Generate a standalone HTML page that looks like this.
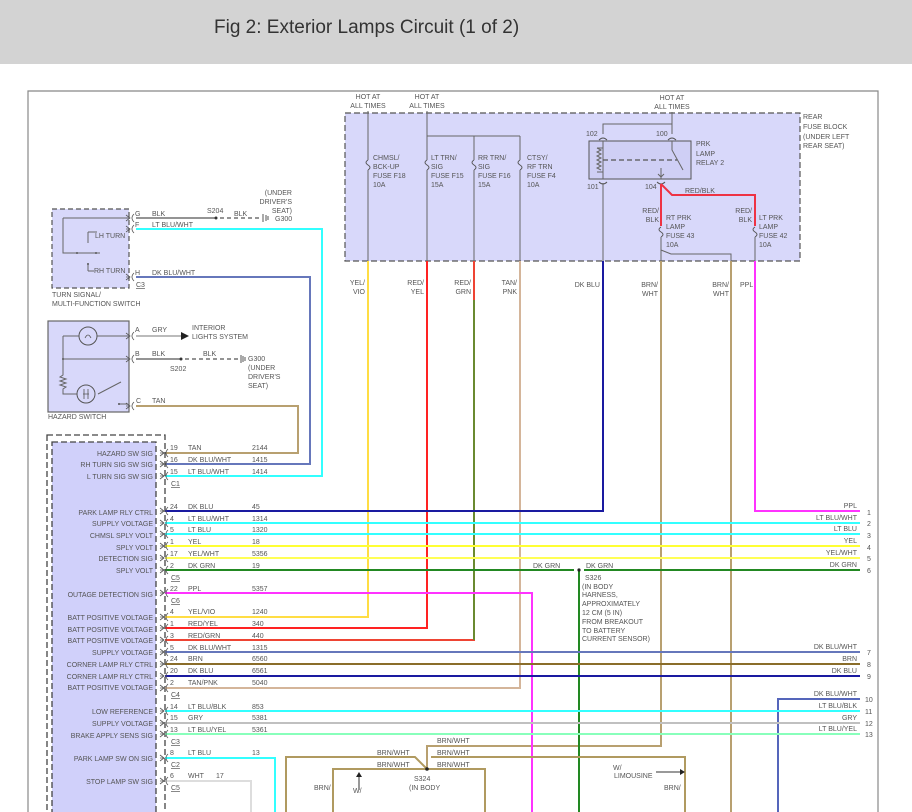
<!DOCTYPE html>
<html><head><meta charset="utf-8"><style>
html,body{margin:0;padding:0;background:#fff;width:912px;height:812px;overflow:hidden}
#hd{position:absolute;left:0;top:0;width:912px;height:64px;background:#d3d3d3}
#hd span{position:absolute;left:214px;top:17px;font:19px "Liberation Sans",sans-serif;color:#333}
svg{position:absolute;left:0;top:0}
text{font-family:"Liberation Sans",sans-serif;font-size:7px;fill:#555}
.e{text-anchor:end}.m{text-anchor:middle}
.w{fill:none;stroke-width:2}
.g{fill:none;stroke:#666;stroke-width:1}
</style></head><body>
<div id="hd"><span>Fig 2: Exterior Lamps Circuit (1 of 2)</span></div>
<svg width="912" height="812" viewBox="0 0 912 812">
<defs>
<symbol id="pin" overflow="visible"><path d="M-9,-3 l4,3 l-4,3 M-5,0 h-4 M-1,-4 q-4,4 0,8" fill="none" stroke="#555" stroke-width="0.8"/></symbol>
<symbol id="fz" overflow="visible"><path d="M0,-5 q-4,2.5 0,5 q4,2.5 0,5" fill="none" stroke="#555" stroke-width="0.9"/></symbol>
</defs>
<!-- frame -->
<path d="M28,812 V91 H878 V812" fill="none" stroke="#888" stroke-width="1.2"/>

<!-- fuse block -->
<rect x="345" y="113" width="455" height="148" fill="#d8d8fa" stroke="#555" stroke-width="1.2" stroke-dasharray="6,3"/>
<text x="803" y="119">REAR</text><text x="803" y="129">FUSE BLOCK</text><text x="803" y="139">(UNDER LEFT</text><text x="803" y="148">REAR SEAT)</text>
<text class="m" x="368" y="99">HOT AT</text><text class="m" x="368" y="108">ALL TIMES</text>
<text class="m" x="427" y="99">HOT AT</text><text class="m" x="427" y="108">ALL TIMES</text>
<text class="m" x="672" y="100">HOT AT</text><text class="m" x="672" y="109">ALL TIMES</text>
<path class="g" d="M368,111 V261 M427,111 V261 M427,136 H520 M474,136 V261 M520,136 V261" stroke-width="1.3"/>
<rect x="366" y="160" width="4" height="10" fill="#d8d8fa"/><use href="#fz" x="368" y="165"/>
<rect x="425" y="160" width="4" height="10" fill="#d8d8fa"/><use href="#fz" x="427" y="165"/>
<rect x="472" y="160" width="4" height="10" fill="#d8d8fa"/><use href="#fz" x="474" y="165"/>
<rect x="518" y="160" width="4" height="10" fill="#d8d8fa"/><use href="#fz" x="520" y="165"/>
<text x="373" y="160">CHMSL/</text><text x="373" y="169">BCK-UP</text><text x="373" y="178">FUSE F18</text><text x="373" y="187">10A</text>
<text x="431" y="160">LT TRN/</text><text x="431" y="169">SIG</text><text x="431" y="178">FUSE F15</text><text x="431" y="187">15A</text>
<text x="478" y="160">RR TRN/</text><text x="478" y="169">SIG</text><text x="478" y="178">FUSE F16</text><text x="478" y="187">15A</text>
<text x="527" y="160">CTSY/</text><text x="527" y="169">RF TRN</text><text x="527" y="178">FUSE F4</text><text x="527" y="187">10A</text>
<!-- relay -->
<path class="g" d="M672,112 V124 H603 V134 M672,124 V134" stroke-width="1.3"/>
<text x="586" y="136">102</text><text x="656" y="136">100</text>
<path d="M599,140 q4,-4 8,0 M668,140 q4,-4 8,0" fill="none" stroke="#555"/>
<rect x="589" y="141" width="102" height="38" fill="#cfcff5" stroke="#555" stroke-width="1"/>
<path class="g" d="M603,141 V179 M597,148 l4,2 -4,2 4,2 -4,2 4,2 -4,2 4,2 -4,2 4,2 -4,2 4,2 M597,148 h6 M597,172 h6 M672,141 V150 L683,170"/>
<path d="M603,160 H677" stroke="#555" stroke-width="1.3" stroke-dasharray="5,3"/>
<path class="g" d="M661,168 V179 M658,174 l3,3 3,-3"/>
<text x="696" y="146">PRK</text><text x="696" y="156">LAMP</text><text x="696" y="165">RELAY 2</text>
<path d="M599,182 q4,4 8,0 M657,182 q4,4 8,0" fill="none" stroke="#555"/>
<text x="587" y="189">101</text><text x="645" y="189">104</text>
<path class="g" d="M603,183 V261" stroke-width="1.3"/>
<path class="w" stroke="#ee3344" d="M661,184 V226 M661,184 L672,195 H755 V226"/>
<text x="685" y="193">RED/BLK</text>
<text class="e" x="659" y="213">RED/</text><text class="e" x="659" y="222">BLK</text>
<text class="e" x="752" y="213">RED/</text><text class="e" x="752" y="222">BLK</text>
<rect x="659" y="227" width="4" height="10" fill="#d8d8fa"/><use href="#fz" x="661" y="232"/>
<rect x="753" y="227" width="4" height="10" fill="#d8d8fa"/><use href="#fz" x="755" y="232"/>
<path class="g" d="M661,237 V261 M661,250 L671,254 H731 V261 M755,237 V261" stroke-width="1.3"/>
<text x="666" y="220">RT PRK</text><text x="666" y="229">LAMP</text><text x="666" y="238">FUSE 43</text><text x="666" y="247">10A</text>
<text x="759" y="220">LT PRK</text><text x="759" y="229">LAMP</text><text x="759" y="238">FUSE 42</text><text x="759" y="247">10A</text>

<!-- labels under fuse block -->
<text class="e" x="365" y="285">YEL/</text><text class="e" x="365" y="294">VIO</text>
<text class="e" x="424" y="285">RED/</text><text class="e" x="424" y="294">YEL</text>
<text class="e" x="471" y="285">RED/</text><text class="e" x="471" y="294">GRN</text>
<text class="e" x="517" y="285">TAN/</text><text class="e" x="517" y="294">PNK</text>
<text class="e" x="600" y="287">DK BLU</text>
<text class="e" x="658" y="287">BRN/</text><text class="e" x="658" y="296">WHT</text>
<text class="e" x="729" y="287">BRN/</text><text class="e" x="729" y="296">WHT</text>
<text x="740" y="287">PPL</text>

<!-- turn signal switch -->
<rect x="52" y="209" width="77" height="79" fill="#d8d8fa" stroke="#555" stroke-width="1.2" stroke-dasharray="5,3"/>
<path class="g" d="M63,218 H128 M63,218 V253 H100 M88,232 V243 M88,232 H97 M88,271 H94 M88,264 V271"/>
<circle cx="77" cy="253" r="1" fill="#555"/><circle cx="96" cy="253" r="1" fill="#555"/><circle cx="88" cy="264" r="1" fill="#555"/>
<text x="95" y="238">LH TURN</text><text x="94" y="273">RH TURN</text>
<use href="#pin" x="135" y="218"/><use href="#pin" x="135" y="229"/><use href="#pin" x="135" y="277"/>
<text x="135" y="216">G</text><text x="135" y="227">F</text><text x="135" y="275">H</text>
<text x="136" y="287" style="text-decoration:underline">C3</text>
<text x="52" y="297">TURN SIGNAL/</text><text x="52" y="306">MULTI-FUNCTION SWITCH</text>
<text x="152" y="216">BLK</text><text x="207" y="213">S204</text><text x="234" y="216">BLK</text>
<path d="M136,218 H216" stroke="#555" stroke-width="1.3"/><circle cx="216" cy="218" r="1.5" fill="#333"/>
<path d="M220,218 H262" stroke="#555" stroke-width="1.3" stroke-dasharray="4,3"/>
<path d="M263,214 v8 M266,215 v6 M268,216 v4" stroke="#555"/>
<text x="275" y="221">G300</text>
<text class="e" x="292" y="195">(UNDER</text><text class="e" x="292" y="204">DRIVER'S</text><text class="e" x="292" y="213">SEAT)</text>
<text x="152" y="227">LT BLU/WHT</text><text x="152" y="275">DK BLU/WHT</text>
<path class="w" stroke="#33ffff" d="M136,229 H322 V476 H165"/>
<path class="w" stroke="#6677bb" d="M136,277 H310 V464 H165"/>

<!-- hazard switch -->
<rect x="48" y="321" width="81" height="91" fill="#d8d8fa" stroke="#666" stroke-width="1.2"/>
<path class="g" d="M63,336 H128 M63,336 V372 M63,359 H128 M63,372 v3 l-3,2 6,2 -6,2 6,2 -6,2 6,2 -3,2 V394 H78 M98,394 L119,383 M119,383 l2,-1 M119,404 H128"/>
<circle cx="88" cy="336" r="9" fill="#d8d8fa" stroke="#555"/><path d="M85,338 q3,-6 6,0" fill="none" stroke="#555" stroke-width="0.8"/>
<circle cx="86" cy="394" r="9" fill="#d8d8fa" stroke="#555"/><path d="M84,389 v10 M88,389 v10 M83,394 h6" stroke="#555" stroke-width="0.8"/>
<circle cx="63" cy="359" r="1" fill="#555"/><circle cx="119" cy="404" r="1" fill="#555"/>
<use href="#pin" x="135" y="336"/><use href="#pin" x="135" y="359"/><use href="#pin" x="135" y="406"/>
<text x="135" y="332">A</text><text x="135" y="356">B</text><text x="136" y="403">C</text>
<text x="48" y="419">HAZARD SWITCH</text>
<text x="152" y="332">GRY</text><path d="M136,336 H182" stroke="#bbb" stroke-width="2"/><path d="M181,332 l8,4 -8,4z" fill="#222"/>
<text x="192" y="330">INTERIOR</text><text x="192" y="339">LIGHTS SYSTEM</text>
<text x="152" y="356">BLK</text><path d="M136,359 H181" stroke="#555" stroke-width="1.3"/><circle cx="181" cy="359" r="1.5" fill="#333"/>
<path d="M185,359 H240" stroke="#555" stroke-width="1.3" stroke-dasharray="4,3"/><path d="M241,355 v8 M243,356 v6 M245,357 v4" stroke="#555"/>
<text x="203" y="356">BLK</text><text x="170" y="371">S202</text>
<text x="248" y="361">G300</text><text x="248" y="370">(UNDER</text><text x="248" y="379">DRIVER'S</text><text x="248" y="388">SEAT)</text>
<text x="152" y="403">TAN</text>
<path class="w" stroke="#b8a070" d="M136,406 H298 V453 H165"/>

<!-- big module -->
<rect x="47" y="435" width="118" height="380" fill="none" stroke="#444" stroke-width="1.3" stroke-dasharray="6,3"/>
<rect x="52" y="442" width="104" height="375" fill="#d0d0fa" stroke="#444" stroke-width="1.3" stroke-dasharray="6,3"/>

<!-- fuse block drops -->
<path class="w" stroke="#ffdd44" d="M368,261 V617 H165"/>
<path class="w" stroke="#ff2222" d="M427,261 V628 H165"/>
<path class="w" stroke="#ee4433" d="M474,261 V640 H165"/>
<path class="w" stroke="#6a8a30" d="M474,300 V640" stroke-width="1"/>
<path class="w" stroke="#d4b59a" d="M520,261 V688 H165"/>
<path class="w" stroke="#1a1aa0" d="M603,261 V511 H165"/>
<path class="w" stroke="#b8a070" d="M661,261 V746 H427 V769"/>
<path class="w" stroke="#b8a070" d="M731,261 V812"/>
<path class="w" stroke="#ff33ff" d="M755,261 V511 H860"/>

<!-- horizontal rows -->
<path class="w" stroke="#33ffff" d="M165,523 H860"/>
<path class="w" stroke="#33ffff" d="M165,534 H860"/>
<path class="w" stroke="#ffff33" d="M165,546 H860"/>
<path class="w" stroke="#ffff55" d="M165,558 H860"/>
<path class="w" stroke="#228822" d="M165,570 H574 M584,570 H860 M579,570 V812"/>
<circle cx="579" cy="570" r="1.6" fill="#222"/>
<path class="w" stroke="#ff33ff" d="M165,593 H532 V812"/>
<path class="w" stroke="#6677bb" d="M165,652 H860"/>
<path class="w" stroke="#8a6d2a" d="M165,664 H860"/>
<path class="w" stroke="#1a1aa0" d="M165,676 H860"/>
<path class="w" stroke="#5566bb" d="M860,699 H778 V812"/>
<path class="w" stroke="#33ffff" d="M165,711 H860"/>
<path class="w" stroke="#c0c0c0" d="M165,723 H860"/>
<path class="w" stroke="#88ffbb" d="M165,734 H860"/>
<path class="w" stroke="#33ffff" d="M165,758 H275 V812"/>
<path class="w" stroke="#dddddd" d="M165,781 H251 V812"/>
<!-- S324 -->
<path class="w" stroke="#b09a60" d="M431,757 H685 V812 M286,812 V757 H415 L427,769 M333,812 V769 H485 V812"/>
<circle cx="427" cy="769" r="1.8" fill="#222"/>
<text x="437" y="743">BRN/WHT</text><text x="437" y="755">BRN/WHT</text><text x="437" y="767">BRN/WHT</text>
<text x="377" y="755">BRN/WHT</text><text x="377" y="767">BRN/WHT</text>
<text x="414" y="781">S324</text><text x="409" y="790">(IN BODY</text>
<text x="314" y="790">BRN/</text><text x="353" y="793">W/</text>
<path d="M359,790 V774" stroke="#333"/><path d="M356,777 l3,-5 3,5z" fill="#222"/>
<text x="613" y="770">W/</text><text x="614" y="778">LIMOUSINE</text>
<path d="M656,772 H681" stroke="#333"/><path d="M680,769 l5,3 -5,3z" fill="#222"/>
<text x="664" y="790">BRN/</text>
<text x="585" y="580">S326</text><text x="582" y="589">(IN BODY</text><text x="582" y="597">HARNESS,</text>
<text x="582" y="606">APPROXIMATELY</text><text x="582" y="615">12 CM (5 IN)</text><text x="582" y="624">FROM BREAKOUT</text>
<text x="582" y="633">TO BATTERY</text><text x="582" y="641">CURRENT SENSOR)</text>
<text x="533" y="568">DK GRN</text><text x="586" y="568">DK GRN</text>

<!-- right labels -->
<text class="e" x="857" y="508">PPL</text><text class="e" x="857" y="520">LT BLU/WHT</text><text class="e" x="857" y="531">LT BLU</text>
<text class="e" x="857" y="543">YEL</text><text class="e" x="857" y="555">YEL/WHT</text><text class="e" x="857" y="567">DK GRN</text>
<text class="e" x="857" y="649">DK BLU/WHT</text><text class="e" x="857" y="661">BRN</text><text class="e" x="857" y="673">DK BLU</text>
<text class="e" x="857" y="696">DK BLU/WHT</text><text class="e" x="857" y="708">LT BLU/BLK</text><text class="e" x="857" y="720">GRY</text><text class="e" x="857" y="731">LT BLU/YEL</text>
<text x="867" y="515">1</text><text x="867" y="526">2</text><text x="867" y="538">3</text><text x="867" y="550">4</text><text x="867" y="561">5</text><text x="867" y="573">6</text>
<text x="867" y="655">7</text><text x="867" y="667">8</text><text x="867" y="679">9</text>
<text x="865" y="702">10</text><text x="865" y="714">11</text><text x="865" y="726">12</text><text x="865" y="737">13</text>

<!-- module left labels & pins -->
<g>
<text class="e" x="153" y="456">HAZARD SW SIG</text><text class="e" x="153" y="467">RH TURN SIG SW SIG</text><text class="e" x="153" y="479">L TURN SIG SW SIG</text>
<text class="e" x="153" y="515">PARK LAMP RLY CTRL</text><text class="e" x="153" y="526">SUPPLY VOLTAGE</text><text class="e" x="153" y="538">CHMSL SPLY VOLT</text>
<text class="e" x="153" y="550">SPLY VOLT</text><text class="e" x="153" y="561">DETECTION SIG</text><text class="e" x="153" y="573">SPLY VOLT</text>
<text class="e" x="153" y="597">OUTAGE DETECTION SIG</text>
<text class="e" x="153" y="620">BATT POSITIVE VOLTAGE</text><text class="e" x="153" y="632">BATT POSITIVE VOLTAGE</text><text class="e" x="153" y="643">BATT POSITIVE VOLTAGE</text>
<text class="e" x="153" y="655">SUPPLY VOLTAGE</text><text class="e" x="153" y="667">CORNER LAMP RLY CTRL</text><text class="e" x="153" y="679">CORNER LAMP RLY CTRL</text>
<text class="e" x="153" y="690">BATT POSITIVE VOLTAGE</text>
<text class="e" x="153" y="714">LOW REFERENCE</text><text class="e" x="153" y="726">SUPPLY VOLTAGE</text><text class="e" x="153" y="738">BRAKE APPLY SENS SIG</text>
<text class="e" x="153" y="761">PARK LAMP SW ON SIG</text><text class="e" x="153" y="784">STOP LAMP SW SIG</text>
</g>
<g>
<use href="#pin" x="169" y="453"/><use href="#pin" x="169" y="464"/><use href="#pin" x="169" y="476"/>
<use href="#pin" x="169" y="511"/><use href="#pin" x="169" y="523"/><use href="#pin" x="169" y="534"/><use href="#pin" x="169" y="546"/><use href="#pin" x="169" y="558"/><use href="#pin" x="169" y="570"/>
<use href="#pin" x="169" y="593"/>
<use href="#pin" x="169" y="617"/><use href="#pin" x="169" y="628"/><use href="#pin" x="169" y="640"/><use href="#pin" x="169" y="652"/><use href="#pin" x="169" y="664"/><use href="#pin" x="169" y="676"/><use href="#pin" x="169" y="688"/>
<use href="#pin" x="169" y="711"/><use href="#pin" x="169" y="723"/><use href="#pin" x="169" y="734"/>
<use href="#pin" x="169" y="758"/><use href="#pin" x="169" y="781"/>
</g>
<g>
<text x="170" y="450">19</text><text x="188" y="450">TAN</text><text x="252" y="450">2144</text>
<text x="170" y="462">16</text><text x="188" y="462">DK BLU/WHT</text><text x="252" y="462">1415</text>
<text x="170" y="474">15</text><text x="188" y="474">LT BLU/WHT</text><text x="252" y="474">1414</text>
<text x="171" y="486" style="text-decoration:underline">C1</text>
<text x="170" y="509">24</text><text x="188" y="509">DK BLU</text><text x="252" y="509">45</text>
<text x="170" y="521">4</text><text x="188" y="521">LT BLU/WHT</text><text x="252" y="521">1314</text>
<text x="170" y="532">5</text><text x="188" y="532">LT BLU</text><text x="252" y="532">1320</text>
<text x="170" y="544">1</text><text x="188" y="544">YEL</text><text x="252" y="544">18</text>
<text x="170" y="556">17</text><text x="188" y="556">YEL/WHT</text><text x="252" y="556">5356</text>
<text x="170" y="568">2</text><text x="188" y="568">DK GRN</text><text x="252" y="568">19</text>
<text x="171" y="580" style="text-decoration:underline">C5</text>
<text x="170" y="591">22</text><text x="188" y="591">PPL</text><text x="252" y="591">5357</text>
<text x="171" y="603" style="text-decoration:underline">C6</text>
<text x="170" y="614">4</text><text x="188" y="614">YEL/VIO</text><text x="252" y="614">1240</text>
<text x="170" y="626">1</text><text x="188" y="626">RED/YEL</text><text x="252" y="626">340</text>
<text x="170" y="638">3</text><text x="188" y="638">RED/GRN</text><text x="252" y="638">440</text>
<text x="170" y="650">5</text><text x="188" y="650">DK BLU/WHT</text><text x="252" y="650">1315</text>
<text x="170" y="661">24</text><text x="188" y="661">BRN</text><text x="252" y="661">6560</text>
<text x="170" y="673">20</text><text x="188" y="673">DK BLU</text><text x="252" y="673">6561</text>
<text x="170" y="685">2</text><text x="188" y="685">TAN/PNK</text><text x="252" y="685">5040</text>
<text x="171" y="697" style="text-decoration:underline">C4</text>
<text x="170" y="709">14</text><text x="188" y="709">LT BLU/BLK</text><text x="252" y="709">853</text>
<text x="170" y="720">15</text><text x="188" y="720">GRY</text><text x="252" y="720">5381</text>
<text x="170" y="732">13</text><text x="188" y="732">LT BLU/YEL</text><text x="252" y="732">5361</text>
<text x="171" y="744" style="text-decoration:underline">C3</text>
<text x="170" y="755">8</text><text x="188" y="755">LT BLU</text><text x="252" y="755">13</text>
<text x="171" y="767" style="text-decoration:underline">C2</text>
<text x="170" y="778">6</text><text x="188" y="778">WHT</text><text x="216" y="778">17</text>
<text x="171" y="790" style="text-decoration:underline">C5</text>
</g>
</svg>
</body></html>
